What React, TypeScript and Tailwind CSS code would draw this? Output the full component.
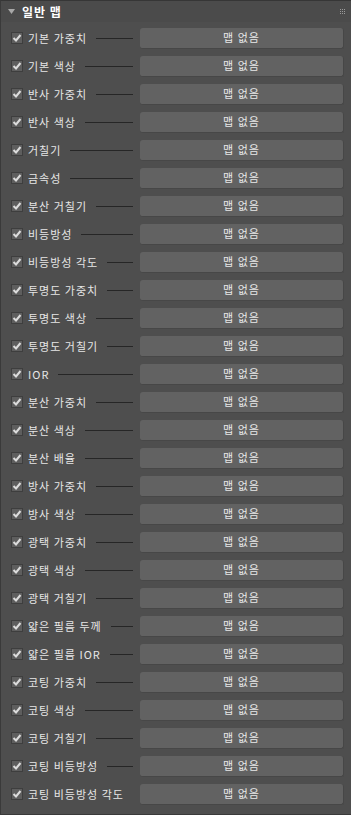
import React from 'react';

const rows = [
  '기본 가중치', '기본 색상', '반사 가중치', '반사 색상', '거칠기', '금속성', '분산 거칠기',
  '비등방성', '비등방성 각도', '투명도 가중치', '투명도 색상', '투명도 거칠기', 'IOR',
  '분산 가중치', '분산 색상', '분산 배율', '방사 가중치', '방사 색상', '광택 가중치',
  '광택 색상', '광택 거칠기', '얇은 필름 두께', '얇은 필름 IOR', '코팅 가중치', '코팅 색상',
  '코팅 거칠기', '코팅 비등방성', '코팅 비등방성 각도',
];

const font = { fontFamily: '"Noto Sans CJK KR", "Noto Sans", sans-serif' };

const Check = () => (
  <div className="w-[12px] h-[12px] shrink-0 bg-[#5e5e5e] border border-[#3e3e3e] flex items-center justify-center">
    <svg width="10" height="10" viewBox="0 0 10 10">
      <path d="M1.5 5 L4 7.5 L8.5 2" stroke="#dcdcdc" strokeWidth="2" fill="none" />
    </svg>
  </div>
);

export default function App() {
  return (
    <div className="w-[351px] h-[815px] bg-[#4e4e4e] text-[#e6e6e6] text-[11px] tracking-[1px] border-t border-t-[#363636] border-l border-l-[#3a3a3a] border-b border-b-[#3a3a3a]" style={font}>
      {/* Header */}
      <div className="h-[21px] flex items-center pl-[7px] pr-[6px] bg-[#4b4b4b]">
        <svg width="7" height="5" viewBox="0 0 7 5" className="mr-[7px]">
          <path d="M0 0 L7 0 L3.5 5 Z" fill="#a8a8a8" />
        </svg>
        <span className="font-bold text-[12px] text-white leading-none">일반 맵</span>
        <div className="ml-auto grid grid-cols-3 gap-[1px]">
          {Array.from({ length: 9 }).map((_, i) => (
            <div key={i} className="w-[1px] h-[1px] bg-[#9a9a9a]" />
          ))}
        </div>
      </div>
      {/* Rows */}
      <div className="pt-[2px]">
        {rows.map((label, i) => (
          <div key={label} className="h-[28px] flex items-center pl-[10px] pr-[7px]">
            <Check />
            <span className="ml-[5px] whitespace-nowrap leading-none">{label}</span>
            {i === rows.length - 1 ? (
              <div className="flex-1" />
            ) : (
              <div className="flex-1 h-[1px] bg-[#262626] mr-[7px] ml-[9px]" />
            )}
            <div className="w-[204px] h-[21px] shrink-0 rounded-[3px] bg-[#626262] border-r border-b border-[#474747] flex items-center justify-center leading-none text-[#e8e8e8]">
              맵 없음
            </div>
          </div>
        ))}
      </div>
    </div>
  );
}
